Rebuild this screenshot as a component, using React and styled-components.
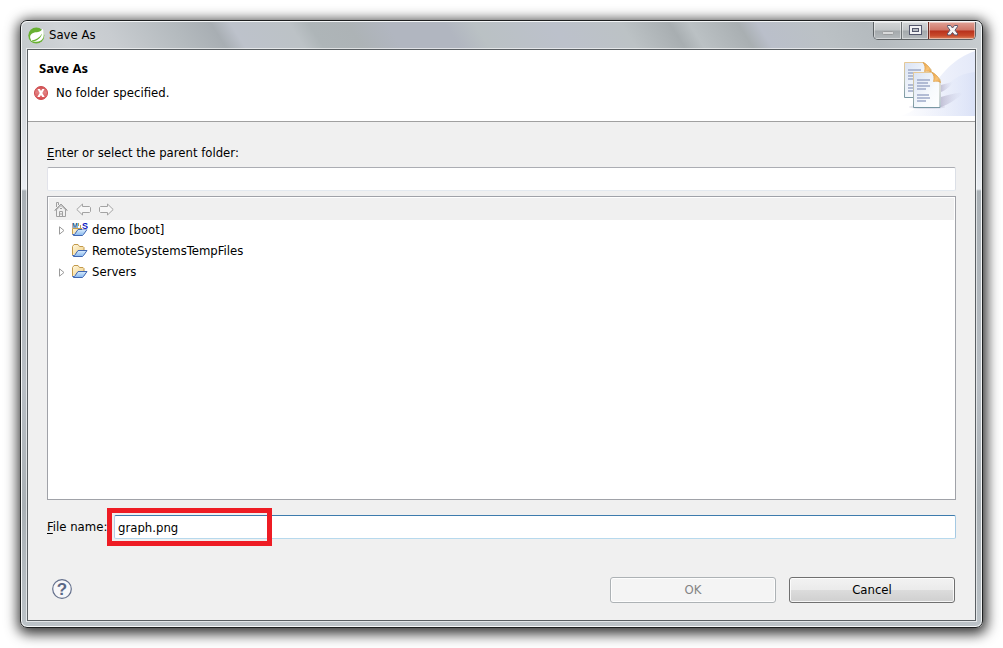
import styled, { createGlobalStyle } from "styled-components"

const folders = [
    { name: "demo [boot]", expandable: true, badge: true },
    { name: "RemoteSystemsTempFiles", expandable: false },
    { name: "Servers", expandable: true },
]

export default function App() {
    return (
        <>
            <GlobalStyle />
            <Page>
                <Window role="dialog" aria-labelledby="window-title">
                    <TitleBar>
                        <SpringIcon />
                        <WindowTitle id="window-title">Save As</WindowTitle>
                        <WindowControls>
                            <ControlButton type="button" aria-label="Minimize" $width={27}>
                                <MinimizeIcon />
                            </ControlButton>
                            <ControlButton type="button" aria-label="Maximize" $width={27}>
                                <MaximizeIcon />
                            </ControlButton>
                            <ControlButton type="button" aria-label="Close" $width={47} $close>
                                <CloseIcon />
                            </ControlButton>
                        </WindowControls>
                    </TitleBar>
                    <Content onSubmit={(e) => e.preventDefault()}>
                        <Header>
                            <HeaderText>
                                <Heading>Save As</Heading>
                                <Message>
                                    <ErrorIcon />
                                    No folder specified.
                                </Message>
                            </HeaderText>
                            <Banner />
                        </Header>
                        <Main>
                            <Label htmlFor="folder"><u>E</u>nter or select the parent folder:</Label>
                            <FolderInput id="folder" type="text" />
                            <TreePanel>
                                <Toolbar>
                                    <ToolButton type="button" aria-label="Home" disabled>
                                        <HomeIcon />
                                    </ToolButton>
                                    <ToolButton type="button" aria-label="Back" disabled>
                                        <ArrowIcon />
                                    </ToolButton>
                                    <ToolButton type="button" aria-label="Forward" disabled>
                                        <ArrowIcon forward />
                                    </ToolButton>
                                </Toolbar>
                                <Tree role="tree">
                                    {folders.map((folder) => (
                                        <TreeRow role="treeitem" key={folder.name}>
                                            <Expander>{folder.expandable ? <ExpandIcon /> : null}</Expander>
                                            <FolderIcon badge={folder.badge} />
                                            <span>{folder.name}</span>
                                        </TreeRow>
                                    ))}
                                </Tree>
                            </TreePanel>
                            <FileRow>
                                <Label htmlFor="filename"><u>F</u>ile name:</Label>
                                <FileInput id="filename" type="text" defaultValue="graph.png" />
                                <Highlight />
                            </FileRow>
                            <Footer>
                                <HelpButton type="button" aria-label="Help">
                                    <HelpIcon />
                                </HelpButton>
                                <Button type="submit" disabled>OK</Button>
                                <Button type="button">Cancel</Button>
                            </Footer>
                        </Main>
                    </Content>
                </Window>
            </Page>
        </>
    )
}

function SpringIcon() {
    return (
        <svg width="17" height="17" viewBox="0 0 17 17">
            <circle cx="8.3" cy="8.5" r="8" fill="#68b132" />
            <path d="M14.6 1.8C15.5 3.500 16.500 7.2 15.2 10.8C13.7 14.2 9.6 15.4 5.6 14.4C4 14.1 3 14 2.700 13.800C3.2 13.6 3.2 13 2.7 12.2C1.2 9.4 2.8 6.500 6.4 5.600C10 4.900 12.500 5.2 14.6 1.8Z" fill="#fff" />
            <path d="M3.6 13.5C8 12.8 11.8 10.6 14 6.4C13 11 8.8 14.3 4.5 14.2Z" fill="#68b132" />
        </svg>
    )
}

function MinimizeIcon() {
    return (
        <svg width="12" height="12" viewBox="0 0 12 12">
            <rect x=".5" y="6.5" width="11" height="3" rx="1" fill="#d9dadb" stroke="#9a9c9e" />
        </svg>
    )
}

function MaximizeIcon() {
    return (
        <svg width="13" height="11" viewBox="0 0 13 11">
            <rect x=".5" y=".5" width="12" height="9" fill="#f2f2f4" stroke="#53566b" />
            <rect x="3.5" y="3.5" width="6" height="3" fill="#b8bcc2" stroke="#53566b" />
        </svg>
    )
}

function CloseIcon() {
    return (
        <svg width="13" height="11" viewBox="0 0 13 11">
            <path d="M1.5.5h3l2 2.5 2-2.500h3v1.200L9 5.200l2.500 3.300v1.500h-3l-2-2.500-2 2.500h-3V8.500L4 5.200 1.500 1.700Z" fill="#f6f4f4" stroke="#59566d" />
        </svg>
    )
}

function ErrorIcon() {
    return (
        <svg width="14" height="14" viewBox="0 0 14 14">
            <defs>
                <linearGradient id="error" x2="0" y2="1">
                    <stop stopColor="#cf4f52" />
                    <stop offset=".45" stopColor="#e28283" />
                    <stop offset="1" stopColor="#d64649" />
                </linearGradient>
            </defs>
            <circle cx="7" cy="7" r="6.500" fill="url(#error)" stroke="#ce4a4d" />
            <path d="M3.500 3h2.300L7 5l1.400-2H10.500L8.300 7l2.400 4H8.300L7 9l-1.300 2H3.300L5.700 7Z" fill="#fff" />
        </svg>
    )
}

function Sheet({ x, y }) {
    return (
        <g transform={`translate(${x} ${y})`}>
            <path d="M.5.5H20L27 7.500V35.500H.5Z" fill="url(#sheet)" stroke="url(#sheetEdge)" />
            <path d="M4 8h13M4 11h11M4 14h13M4 17h9M4 23h12M4 26h13M4 29h9" stroke="#9da9c8" strokeWidth="1.300" />
            <path d="M19 .500C22 1.500 26 5 27.500 10.500C25.500 9 23 9 20.500 9.500C21.500 6 21 3 19 .500Z" fill="url(#fold)" stroke="#dda04b" strokeWidth=".7" />
        </g>
    )
}

function Banner() {
    return (
        <svg width="76" height="66" viewBox="0 0 76 66" aria-hidden="true">
            <defs>
                <linearGradient id="wave">
                    <stop stopColor="#fff" />
                    <stop offset=".55" stopColor="#eef1fb" />
                    <stop offset="1" stopColor="#e4e9f9" />
                </linearGradient>
                <linearGradient id="wave2">
                    <stop stopColor="#f4f6fd" stopOpacity="0" />
                    <stop offset="1" stopColor="#d8e0f6" stopOpacity=".8" />
                </linearGradient>
                <linearGradient id="shade">
                    <stop stopColor="#a8a3bf" stopOpacity=".6" />
                    <stop offset="1" stopColor="#c5c8e2" stopOpacity="0" />
                </linearGradient>
                <linearGradient id="sheet" x2="1" y2="1">
                    <stop stopColor="#d9e2f3" />
                    <stop offset=".6" stopColor="#f7fafd" />
                    <stop offset="1" stopColor="#fff" />
                </linearGradient>
                <linearGradient id="sheetEdge" x2="0" y2="1">
                    <stop stopColor="#e7c996" />
                    <stop offset=".5" stopColor="#b9bfb2" />
                    <stop offset="1" stopColor="#7897a3" />
                </linearGradient>
                <linearGradient id="fold" x2="1" y2="1">
                    <stop stopColor="#e99c3c" />
                    <stop offset=".6" stopColor="#f9c477" />
                    <stop offset="1" stopColor="#e79e46" />
                </linearGradient>
            </defs>
            <path d="M0 66C32 61 32 16 76 1V66Z" fill="url(#wave)" />
            <path d="M20 66C38 62 40 25 76 22V66Z" fill="url(#wave2)" />
            <path d="M42 35C47 34 51 32 54 32C52 36 47 40 42 42Z" fill="url(#shade)" />
            <path d="M42 47C50 45 58 42 64 43C59 48 51 54 42 57Z" fill="url(#shade)" />
            <ellipse cx="28" cy="57" rx="18" ry="2" fill="#a8a3bf" opacity=".25" />
            <Sheet x={5} y={12} />
            <Sheet x={14} y={22} />
        </svg>
    )
}

function HomeIcon() {
    return (
        <svg width="14" height="15" viewBox="0 0 14 15" fill="none" stroke="#a0a0a0">
            <path d="M.5 8.500 7 2l6.500 6.500M1.500 8.500 7 3.500l5.500 5" />
            <path d="M2.500 5V.5h2V3M2.500 8v6.500h9V8" />
            <path d="M5.500 14.500v-5h3v5" />
            <path d="M6 6.500h2M6 12h2" />
        </svg>
    )
}

function ArrowIcon({ forward }) {
    return (
        <svg width="15" height="13" viewBox="0 0 15 13" fill="#f6f6f6" stroke="#a3a3a3">
            {forward ? (
                <path d="M14.200 6.500 8.500 1v2.500h-7l-1 1v4l1 1h7V12Z" />
            ) : (
                <path d="M.8 6.500 6.500 1v2.500h7l1 1v4l-1 1h-7V12Z" />
            )}
        </svg>
    )
}

function ExpandIcon() {
    return (
        <svg width="6" height="9" viewBox="0 0 6 9">
            <path d="M.5.8v7.400L5 4.500Z" fill="#fff" stroke="#9a9a9a" />
        </svg>
    )
}

function FolderIcon({ badge }) {
    return (
        <svg width="16" height="16" viewBox="0 0 16 16">
            <defs>
                <linearGradient id="folderBack" x2="1" y2="1">
                    <stop stopColor="#fff7df" />
                    <stop offset="1" stopColor="#efcf83" />
                </linearGradient>
                <linearGradient id="folderFront" x2="0" y2="1">
                    <stop stopColor="#d9ecfc" />
                    <stop offset="1" stopColor="#86b7ee" />
                </linearGradient>
            </defs>
            {badge ? (
                <path d="M.5 12V6.500h11V9" fill="url(#folderBack)" stroke="#c7a04f" />
            ) : (
                <path d="M.5 12V3.500l1.500-2h4l1.500 2h3.500l1 1V8" fill="url(#folderBack)" stroke="#c39a4b" />
            )}
            <path d="M.6 12.500H2.500L6 7.500H15L11.500 12.500 10.500 13.500H1.500Z" fill="url(#folderFront)" stroke="#3f65b1" />
            {badge ? (
                <>
                    <path d="M0 0h9v6H0ZM10 0h6v7.500h-6Z" fill="#fff" />
                    <path d="M6.500 1v3M8.500 3v4" stroke="#b8a15c" />
                    <BadgeText x="0" y="6" fill="#28618f">M</BadgeText>
                    <BadgeText x="10" y="7" fill="#0818c0" $large>S</BadgeText>
                </>
            ) : null}
        </svg>
    )
}

function HelpIcon() {
    return (
        <svg width="20" height="20" viewBox="0 0 20 20">
            <circle cx="10" cy="10" r="9.300" fill="#f7f7f9" stroke="#65718d" strokeWidth="1.200" />
            <HelpMark x="10" y="16" textAnchor="middle">?</HelpMark>
        </svg>
    )
}

const GlobalStyle = createGlobalStyle`
    *{
        box-sizing: border-box;
    }

    body{
        margin: 0;
        background: #fff;
        color: #000;
        font-family: "DejaVu Sans Condensed", "Noto Sans", sans-serif;
        font-size: 13px;
        line-height: 20px;
    }

    button, input{
        font: inherit;
        color: inherit;
    }

    svg{
        display: block;
        flex-shrink: 0;
    }
`

const Page = styled.div`
    min-height: 100vh;
    padding: 20px;
    display: flex;
`

const Window = styled.div`
    flex: 1;
    min-width: 0;
    display: flex;
    flex-direction: column;
    border: 1px solid #1d1f20;
    border-radius: 7px;
    background: linear-gradient(to bottom, #c6cbcf 28px, #e9edf2 168px, #a9b0b5 170px, #b9bfc5 60%, #a9b0b5 80%, #bcc3c8);
    box-shadow: inset 0 0 0 1px #f4f6f7, 1px 3px 13px 3px rgba(0, 0, 0, .8);
`

const TitleBar = styled.header`
    height: 28px;
    margin: 0 1px;
    padding-left: 6px;
    display: flex;
    align-items: center;
    gap: 4px;
    border-top: 1px solid #f4f6f7;
    border-radius: 6px 6px 0 0;
    background: linear-gradient(58deg, #c5cacd 0%, #cfd3d6 5%, #c8ccd0 10%, #b4babe 17%, #a8aeb3 21%, #bdc2cb 23%, #bcc2c6 29%, #aeb5b8 31%, #adb3b6 35%, #b1b6c0 39%, #b1b6c0 45%, #bac1c4 48%, #bcc1cb 56%, #bcc2c5 63%, #a8aeb1 68%, #bbc1c4 70%, #a9afb2 75%, #babfca 77%, #bbc1c5 83%, #b5bbbf 88%, #c9ced1 100%);
`

const WindowTitle = styled.div`
    flex: 1;
    padding-bottom: 2px;
`

const WindowControls = styled.div`
    align-self: flex-start;
    display: flex;
    margin-right: 5px;
    overflow: hidden;
    border: 1px solid #5d6265;
    border-top: 0;
    border-radius: 0 0 5px 5px;
`

const ControlButton = styled.button`
    width: ${props => props.$width}px;
    height: 17px;
    padding: 0;
    display: flex;
    align-items: center;
    justify-content: center;
    border: 0;
    border-left: 1px solid ${props => props.$close ? "#6e2b22" : "#6b7073"};
    box-shadow: inset 0 0 0 1px rgba(255, 255, 255, .45);
    background: ${props => props.$close
        ? "linear-gradient(#e0a297, #cf7566 48%, #b8301b 52%, #c84a2b 80%, #dc8660)"
        : "linear-gradient(#d3d6d8, #c1c5c7 48%, #a4a9ac 52%, #b5babd)"};

    &:first-child{
        border-left: 0;
    }
`

const Content = styled.form`
    flex: 1;
    margin: 0 6px 6px;
    display: flex;
    flex-direction: column;
    border: 1px solid #5a5f63;
    background: #f0f0f0;
    box-shadow: 0 0 0 1px rgba(255, 255, 255, .6);
`

const Header = styled.div`
    min-height: 72px;
    display: flex;
    justify-content: space-between;
    border-bottom: 1px solid #a0a0a0;
    background: #fff;
`

const HeaderText = styled.div`
    padding: 8px 6px 0;
    display: flex;
    flex-direction: column;
    gap: 5px;
`

const Heading = styled.h1`
    margin: 0;
    padding-left: 5px;
    font-family: "Noto Sans", sans-serif;
    font-size: 13px;
    font-weight: 700;
`

const Message = styled.div`
    display: flex;
    align-items: center;
    gap: 8px;
`

const Main = styled.div`
    flex: 1;
    padding: 21px 19px 17px;
    display: flex;
    flex-direction: column;
`

const Label = styled.label`
    white-space: nowrap;

    u{
        text-underline-offset: 2px;
    }
`

const TextInput = styled.input`
    height: 24px;
    min-width: 0;
    padding: 0 3px;
    border: 1px solid;
    border-radius: 2px;
    background: #fff;
    outline: none;
`

const FolderInput = styled(TextInput)`
    margin: 4px 0 5px;
    border-color: #abadb3 #dbdfe6 #e3e9ef #e2e3ea;
`

const FileInput = styled(TextInput)`
    flex: 1;
    border-color: #3d7bad #a4c9e3 #b7d9ed #b5cfe7;
`

const TreePanel = styled.div`
    flex: 1;
    min-height: 120px;
    padding: 1px;
    border: 1px solid #a0a2a8;
    background: #fff;
`

const Toolbar = styled.div`
    height: 22px;
    padding-left: 4px;
    display: flex;
    align-items: center;
    gap: 8px;
    background: #f0f0f0;
`

const ToolButton = styled.button`
    width: 15px;
    height: 16px;
    padding: 0;
    display: flex;
    align-items: center;
    justify-content: center;
    border: 0;
    background: none;
`

const Tree = styled.ul`
    margin: 0;
    padding: 0;
    list-style: none;
`

const TreeRow = styled.li`
    height: 21px;
    padding: 0 0 2px 10px;
    display: flex;
    align-items: center;

    span{
        margin-left: 4px;
    }
`

const Expander = styled.div`
    width: 13px;
    padding-top: 2px;
`

const FileRow = styled.div`
    position: relative;
    margin-top: 15px;
    display: flex;
    align-items: center;

    label{
        width: 67px;
    }
`

// red marker drawn over the file name field
const Highlight = styled.div`
    position: absolute;
    left: 60px;
    top: -7px;
    width: 165px;
    height: 38px;
    border: 5px solid #ee1c24;
    pointer-events: none;
`

const Footer = styled.div`
    margin-top: 38px;
    display: flex;
    align-items: center;
    gap: 13px;
`

const HelpButton = styled.button`
    margin: 0 auto 0 5px;
    padding: 0 0 2px;
    border: 0;
    background: none;
`

const Button = styled.button`
    width: 166px;
    height: 26px;
    padding: 0;
    border: 1px solid #707070;
    border-radius: 3px;
    background: linear-gradient(#f2f2f2, #ebebeb 48%, #dcdcdc 50%, #cfcfcf);
    box-shadow: inset 0 0 0 1px rgba(255, 255, 255, .8);

    &:last-child{
        margin-right: 1px;
    }

    &:disabled{
        border-color: #adb2b5;
        background: #f4f4f4;
        color: #838383;
    }
`

const BadgeText = styled.text`
    font-family: "Liberation Sans", sans-serif;
    font-size: ${props => props.$large ? 9 : 7}px;
    font-weight: 700;
`

const HelpMark = styled.text`
    font-family: "Liberation Sans", sans-serif;
    font-size: 17px;
    font-weight: 700;
    fill: #5b6885;
`
